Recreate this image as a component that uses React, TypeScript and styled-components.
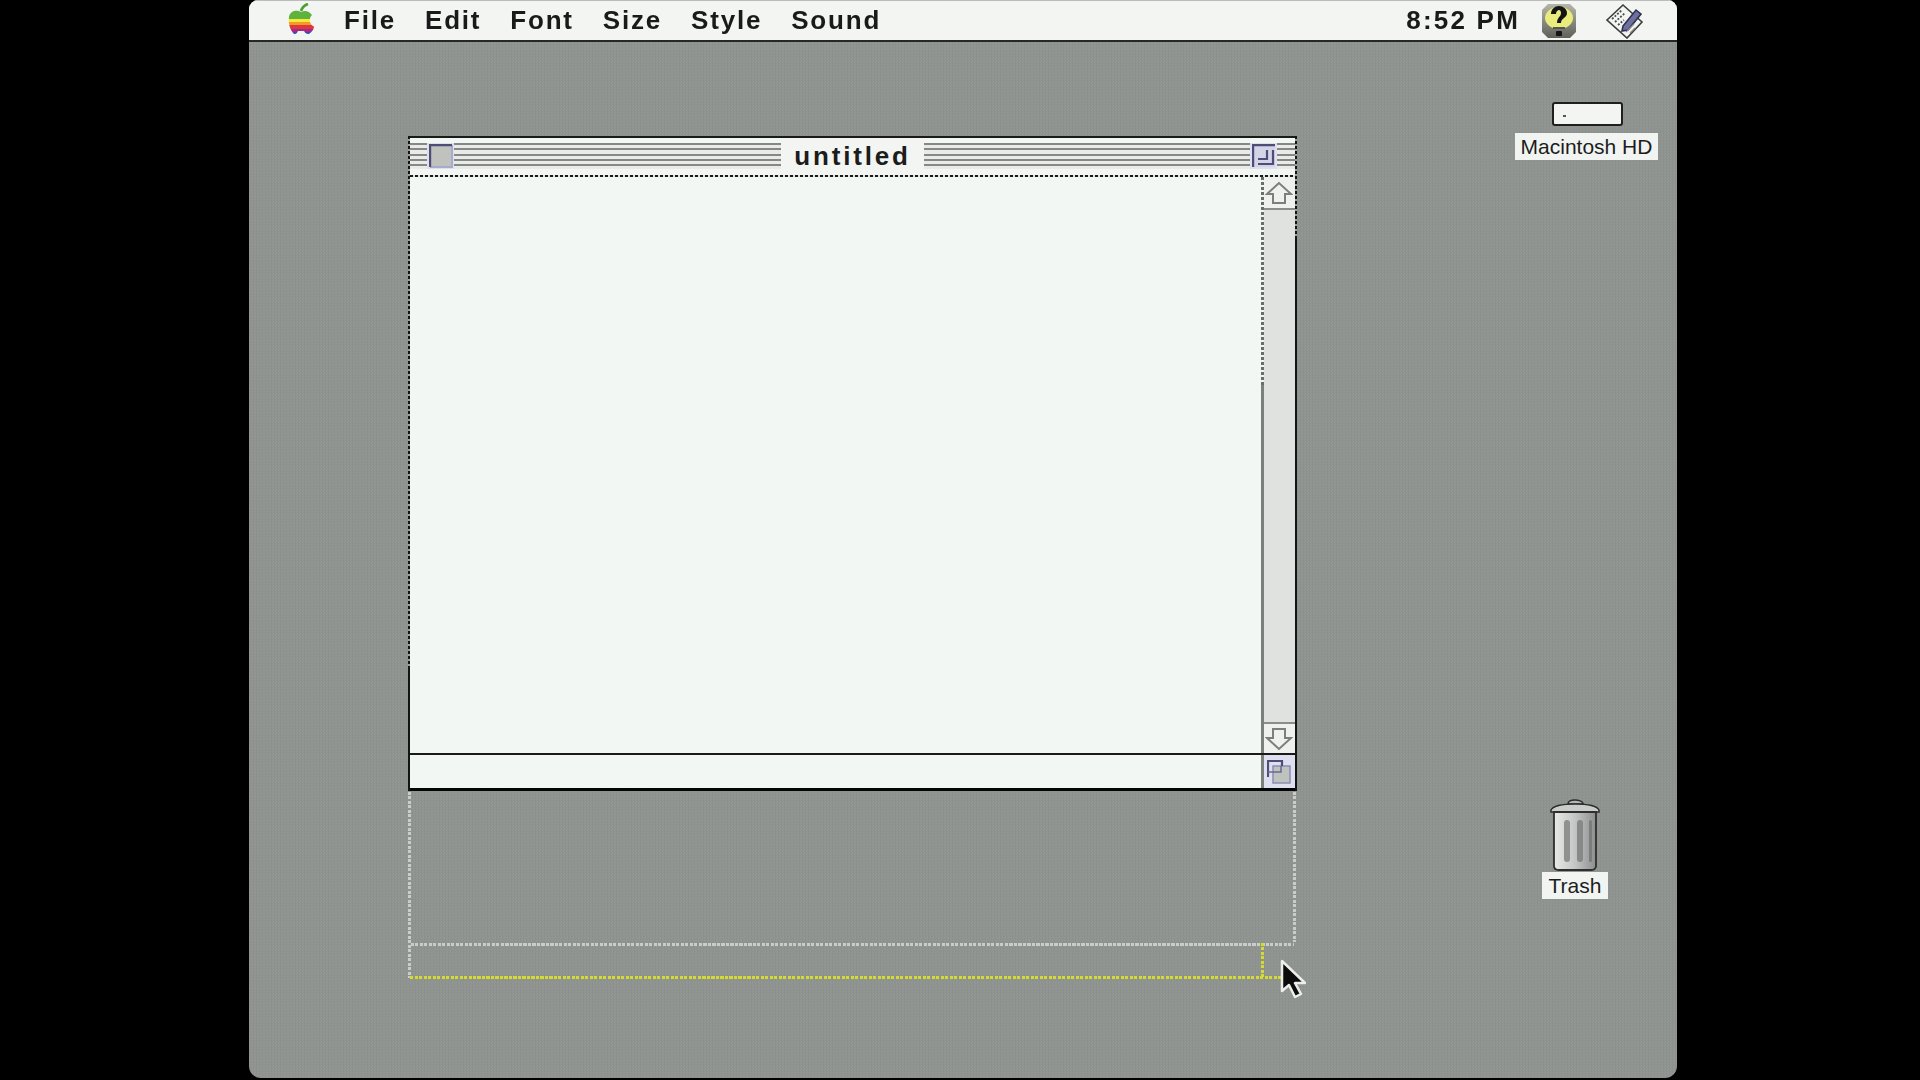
import React from "react";
import styled, { createGlobalStyle } from "styled-components";

const GlobalStyle = createGlobalStyle`
  html, body {
    margin: 0;
    height: 100%;
    background: #000;
    overflow: hidden;
  }
  #root {
    height: 100%;
  }
`;

const Page = styled.div`
  width: 1920px;
  height: 1080px;
  padding-left: 249px;
  box-sizing: border-box;
  background: #000;
`;

const Screen = styled.div`
  position: relative;
  width: 1428px;
  height: 1078px;
  display: flex;
  flex-direction: column;
  overflow: hidden;
  border-radius: 9px 9px 12px 12px;
  background-color: #8f9491;
  background-image: repeating-conic-gradient(#8c918e 0 25%, #929794 0 50%);
  background-size: 3px 3px;
  filter: blur(0.6px);
`;

const MenuBar = styled.header`
  height: 39px;
  flex: none;
  display: flex;
  align-items: center;
  padding: 0 33px 0 38px;
  background: #f3f5f3;
  border-top: 1px solid #b9bcba;
  border-bottom: 2px solid #262826;
  font-family: "Liberation Sans", Arial, sans-serif;
  font-weight: 700;
  font-size: 26px;
  color: #1a1a1a;
`;

const AppleLogo = styled.svg`
  width: 28px;
  height: 32px;
  margin-right: 29px;
  margin-top: -3px;
`;

const Menus = styled.nav`
  display: flex;
  gap: 29px;
`;

const MenuItem = styled.span`
  letter-spacing: 1.8px;
`;

const Tray = styled.div`
  margin-left: auto;
  display: flex;
  align-items: center;
`;

const Clock = styled.span`
  letter-spacing: 2.2px;
  margin-right: 21px;
`;

const HelpIcon = styled.svg`
  width: 36px;
  height: 36px;
  margin-right: 29px;
`;

const EditIcon = styled.svg`
  width: 38px;
  height: 36px;
`;

const Desktop = styled.main`
  position: relative;
  flex: 1;
`;

const Window = styled.section`
  position: absolute;
  left: 159px;
  top: 94px;
  width: 889px;
  height: 655px;
  box-sizing: border-box;
  padding: 2px 2px 3px 2px;
  display: flex;
  flex-direction: column;
  background:
    linear-gradient(#141414, #141414) left bottom / 2px 125px no-repeat,
    repeating-linear-gradient(180deg, #141414 0 3px, #9a9d9a 3px 5px) left top / 2px 100% no-repeat,
    linear-gradient(#141414, #141414) right bottom / 2px 555px no-repeat,
    repeating-linear-gradient(180deg, #141414 0 3px, #9a9d9a 3px 5px) right top / 2px 100% no-repeat,
    linear-gradient(#1a1a1a, #1a1a1a) top / 100% 2px no-repeat,
    linear-gradient(#050505, #050505) bottom / 100% 3px no-repeat,
    #f2f7f4;
`;

const TitleBar = styled.div`
  height: 37px;
  flex: none;
  box-sizing: border-box;
  padding: 5px 0 6px;
  display: grid;
  grid-template-columns: 1fr auto 1fr;
  align-items: stretch;
  background: repeating-linear-gradient(180deg, #858885 0 2px, #e9ebe9 2px 5.3px) content-box;
  background-color: #f3f5f3;
`;

const TitleSide = styled.div<{ $end?: boolean }>`
  display: flex;
  justify-content: ${(p) => (p.$end ? "flex-end" : "flex-start")};
  padding: 0 ${(p) => (p.$end ? "18px" : "0")} 0 ${(p) => (p.$end ? "0" : "17px")};
`;

const BoxCell = styled.div`
  width: 27px;
  display: flex;
  align-items: center;
  justify-content: center;
  background: #dfe0ef;
`;

const TitleBox = styled.svg`
  width: 24px;
  height: 24px;
`;

const Title = styled.h1`
  margin: -5px 0 -6px;
  width: 143px;
  display: flex;
  align-items: center;
  justify-content: center;
  background: #f3f5f3;
  font-family: "Liberation Sans", Arial, sans-serif;
  font-weight: 700;
  font-size: 26px;
  letter-spacing: 2.8px;
  color: #1c1c1c;
`;

const DottedRule = styled.div`
  height: 2px;
  flex: none;
  background: repeating-linear-gradient(90deg, #1a1a1a 0 3px, #dfe1df 3px 5px);
`;

const Body = styled.div`
  flex: 1;
  min-height: 0;
  display: grid;
  grid-template-columns: 1fr 34px;
  grid-template-rows: 1fr 33px;
`;

const Content = styled.div`
  background: #f2f7f4;
  border-bottom: 2px solid #1a1a1a;
`;

const ScrollBar = styled.div`
  display: flex;
  flex-direction: column;
  border-bottom: 2px solid #1a1a1a;
  background:
    linear-gradient(#7c7f7c, #7c7f7c) left bottom / 3px calc(100% - 208px) no-repeat,
    repeating-linear-gradient(180deg, #6a6d6a 0 3px, #f0f2f0 3px 5px) left top / 3px 100% no-repeat,
    #e0e2e0;
  padding-left: 3px;
`;

const ArrowCell = styled.div<{ $down?: boolean }>`
  height: ${(p) => (p.$down ? "31px" : "33px")};
  flex: none;
  box-sizing: border-box;
  padding-right: 2px;
  display: flex;
  align-items: center;
  justify-content: center;
  background: #eff1ef;
  ${(p) => (p.$down ? "border-top" : "border-bottom")}: 2px solid #8a8d8a;
`;

const ScrollArrow = styled.svg`
  width: 28px;
  height: 24px;
`;

const Track = styled.div`
  flex: 1;
`;

const BottomBar = styled.div`
  background: #f2f7f4;
`;

const GrowCell = styled.div`
  display: flex;
  align-items: center;
  justify-content: center;
  padding-right: 2px;
  background: #dfe0ef;
  border-left: 3px solid #7c7f7c;
`;

const DiskIcon = styled.div`
  position: absolute;
  top: 60px;
  left: 1303px;
  width: 71px;
  height: 24px;
  box-sizing: border-box;
  border: 2px solid #1f1f1f;
  border-radius: 3px;
  background: #f3f5f3;
  padding: 11px 0 0 9px;
  &::after {
    content: "";
    display: block;
    width: 3px;
    height: 2px;
    background: #555;
  }
`;

const IconLabel = styled.div<{ $top: number; $left: number; $width: number }>`
  position: absolute;
  top: ${(p) => p.$top}px;
  left: ${(p) => p.$left}px;
  width: ${(p) => p.$width}px;
  height: 27px;
  display: flex;
  align-items: center;
  justify-content: center;
  background: #f2f4f2;
  font-family: "Liberation Sans", Arial, sans-serif;
  font-size: 21px;
  color: #1d1d1d;
  white-space: nowrap;
`;

const TrashIcon = styled.svg`
  position: absolute;
  top: 757px;
  left: 1301px;
  width: 50px;
  height: 72px;
`;

const DragLine = styled.div<{ $x: number; $y: number; $len: number; $vertical?: boolean; $color: string }>`
  position: absolute;
  left: ${(p) => p.$x}px;
  top: ${(p) => p.$y}px;
  width: ${(p) => (p.$vertical ? "2.5px" : `${p.$len}px`)};
  height: ${(p) => (p.$vertical ? `${p.$len}px` : "2.5px")};
  background: repeating-linear-gradient(
    ${(p) => (p.$vertical ? "180deg" : "90deg")},
    ${(p) => p.$color} 0 3px,
    transparent 3px 4.5px
  );
`;

const Cursor = styled.svg`
  position: absolute;
  left: 1031px;
  top: 917px;
  width: 26px;
  height: 40px;
`;

const WHITE_LINE = "#c9ccc9";
const YELLOW_LINE = "#d4da30";

const menus = ["File", "Edit", "Font", "Size", "Style", "Sound"];

export default function App() {
  return (
    <>
      <GlobalStyle />
      <Page>
        <Screen>
          <MenuBar>
            <AppleLogo viewBox="0 0 28 32">
              <defs>
                <linearGradient id="rainbow" x1="0" y1="0" x2="0" y2="1">
                  <stop offset="0.34" stopColor="#5db33c" />
                  <stop offset="0.34" stopColor="#f6e93a" />
                  <stop offset="0.5" stopColor="#f6e93a" />
                  <stop offset="0.5" stopColor="#f39a2c" />
                  <stop offset="0.63" stopColor="#f39a2c" />
                  <stop offset="0.63" stopColor="#e0373a" />
                  <stop offset="0.78" stopColor="#e0373a" />
                  <stop offset="0.78" stopColor="#a12a8e" />
                  <stop offset="0.93" stopColor="#a12a8e" />
                  <stop offset="0.93" stopColor="#3b4bb5" />
                </linearGradient>
              </defs>
              <path d="M14 8 C15 5 18 2 21 1" fill="none" stroke="#4f9f35" strokeWidth="2.8" />
              <path
                d="M14 9 C10 6.500 3 7.500 2 14 C1 20 3 27 7 31 C9 31.500 10 30 11 28 H17 C18 30 20 31.500 22 31 C25 29 27 26 27 23.500 C23 22 21 16 25 12 C22 8 18 7 14 9Z"
                fill="url(#rainbow)"
              />
            </AppleLogo>
            <Menus>
              {menus.map((m) => (
                <MenuItem key={m}>{m}</MenuItem>
              ))}
            </Menus>
            <Tray>
              <Clock>8:52 PM</Clock>
              <HelpIcon viewBox="0 0 36 36">
                <defs>
                  <linearGradient id="helpFrame" x1="0" y1="0" x2="0" y2="1">
                    <stop offset="0" stopColor="#b4b6a6" />
                    <stop offset="1" stopColor="#5f615a" />
                  </linearGradient>
                </defs>
                <path d="M7 1h22l6 6v22l-6 6H7l-6-6V7z" fill="url(#helpFrame)" />
                <ellipse cx="18" cy="15" rx="14" ry="11" fill="#e9ec7c" />
                <path
                  d="M10 11c0-5 4-8 8-8s8 3 8 7c0 5-6 5-6 10h-4c0-6 4-6 4-10 0-2-1-3-2-3s-3 1-3 4z"
                  fill="#141414"
                />
                <rect x="12" y="24" width="12" height="2" fill="#55574c" />
                <rect x="15" y="28" width="6" height="5" rx="1" fill="#141414" />
              </HelpIcon>
              <EditIcon viewBox="0 0 38 36">
                <path d="M1 17L17 2l19 17-15 16z" fill="#f3f5f3" stroke="#3b3d3b" strokeWidth="1.600" />
                <path d="M6 16l10-9M9 19l10-9M12 22l6-5" stroke="#4c4e4c" strokeWidth="1.800" strokeDasharray="2 1.500" />
                <path d="M17 23L30 7l5 4-13 16-6 1z" fill="#6e70a0" stroke="#30304f" strokeWidth="1.600" />
                <path d="M20 29l8-8M24 30l5-5" stroke="#8a8c8a" strokeWidth="1.200" />
              </EditIcon>
            </Tray>
          </MenuBar>
          <Desktop>
            <Window>
              <TitleBar>
                <TitleSide>
                  <BoxCell>
                    <TitleBox viewBox="0 0 24 24">
                      <rect x="1" y="1" width="22" height="22" fill="#bfc2bd" />
                      <path d="M23 1v22H1" fill="none" stroke="#a9aacc" strokeWidth="2" />
                      <path d="M1 23V1h22" fill="none" stroke="#4d4d78" strokeWidth="2.400" />
                    </TitleBox>
                  </BoxCell>
                </TitleSide>
                <Title>untitled</Title>
                <TitleSide $end>
                  <BoxCell>
                    <TitleBox viewBox="0 0 24 24">
                      <rect x="1" y="1" width="22" height="22" fill="#d3d4e6" />
                      <path d="M1 23V1h22" fill="none" stroke="#4d4d78" strokeWidth="2.400" />
                      <path d="M6 15h9V6M6 20h15V6" fill="none" stroke="#4d4d78" strokeWidth="2.200" />
                    </TitleBox>
                  </BoxCell>
                </TitleSide>
              </TitleBar>
              <DottedRule />
              <Body>
                <Content />
                <ScrollBar>
                  <ArrowCell>
                    <ScrollArrow viewBox="0 0 28 24">
                      <path d="M14 2L2 13h6v9h12v-9h6z" fill="none" stroke="#7c7f7c" strokeWidth="2" />
                    </ScrollArrow>
                  </ArrowCell>
                  <Track />
                  <ArrowCell $down>
                    <ScrollArrow viewBox="0 0 28 24">
                      <path d="M14 22L2 11h6V2h12v9h6z" fill="none" stroke="#7c7f7c" strokeWidth="2" />
                    </ScrollArrow>
                  </ArrowCell>
                </ScrollBar>
                <BottomBar />
                <GrowCell>
                  <TitleBox viewBox="0 0 24 24">
                    <rect x="6" y="6" width="17" height="17" fill="#bfc2bd" stroke="#8c8db5" strokeWidth="1.500" />
                    <path d="M1 17V1h14v5" fill="none" stroke="#4d4d78" strokeWidth="2.200" />
                    <path d="M1 12h13V6" fill="none" stroke="#6a6a95" strokeWidth="1.500" />
                  </TitleBox>
                </GrowCell>
              </Body>
            </Window>

            <DiskIcon />
            <IconLabel $top={91} $left={1266} $width={143}>
              Macintosh HD
            </IconLabel>

            <TrashIcon viewBox="0 0 50 72">
              <defs>
                <linearGradient id="can" x1="0" y1="0" x2="1" y2="0">
                  <stop offset="0" stopColor="#e8eae8" />
                  <stop offset="0.5" stopColor="#c3c6c4" />
                  <stop offset="1" stopColor="#8b8e8c" />
                </linearGradient>
              </defs>
              <path d="M18 5c0-3 4-4 7-4s8 1 8 4z" fill="#b5b8b6" stroke="#2c2c2c" strokeWidth="1.500" />
              <path d="M1 11c2-4 8-6 24-6s22 2 24 6v2H1z" fill="#c9ccca" stroke="#2c2c2c" strokeWidth="1.500" />
              <path d="M4 13h42v54c0 3-3 4-5 4H9c-3 0-5-1-5-4z" fill="url(#can)" stroke="#2f2f2f" strokeWidth="1.800" />
              <rect x="14" y="21" width="6" height="42" rx="3" fill="#8e918f" />
              <rect x="27" y="21" width="6" height="42" rx="3" fill="#868987" />
              <rect x="39" y="21" width="3" height="42" rx="1.500" fill="#7a7d7b" />
            </TrashIcon>
            <IconLabel $top={830} $left={1293} $width={66}>
              Trash
            </IconLabel>

            <DragLine $x={159} $y={750} $len={186} $vertical $color={WHITE_LINE} />
            <DragLine $x={1044} $y={750} $len={150} $vertical $color={WHITE_LINE} />
            <DragLine $x={162} $y={901} $len={883} $color={WHITE_LINE} />
            <DragLine $x={161} $y={934} $len={872} $color={YELLOW_LINE} />
            <DragLine $x={1012} $y={901} $len={34} $vertical $color={YELLOW_LINE} />

            <Cursor viewBox="0 0 26 40">
              <path
                d="M2 2v30l7-6 6 12 6-3-6-11h10z"
                fill="#0c0c0c"
                stroke="#eceeec"
                strokeWidth="2.500"
                strokeLinejoin="round"
              />
            </Cursor>
          </Desktop>
        </Screen>
      </Page>
    </>
  );
}
